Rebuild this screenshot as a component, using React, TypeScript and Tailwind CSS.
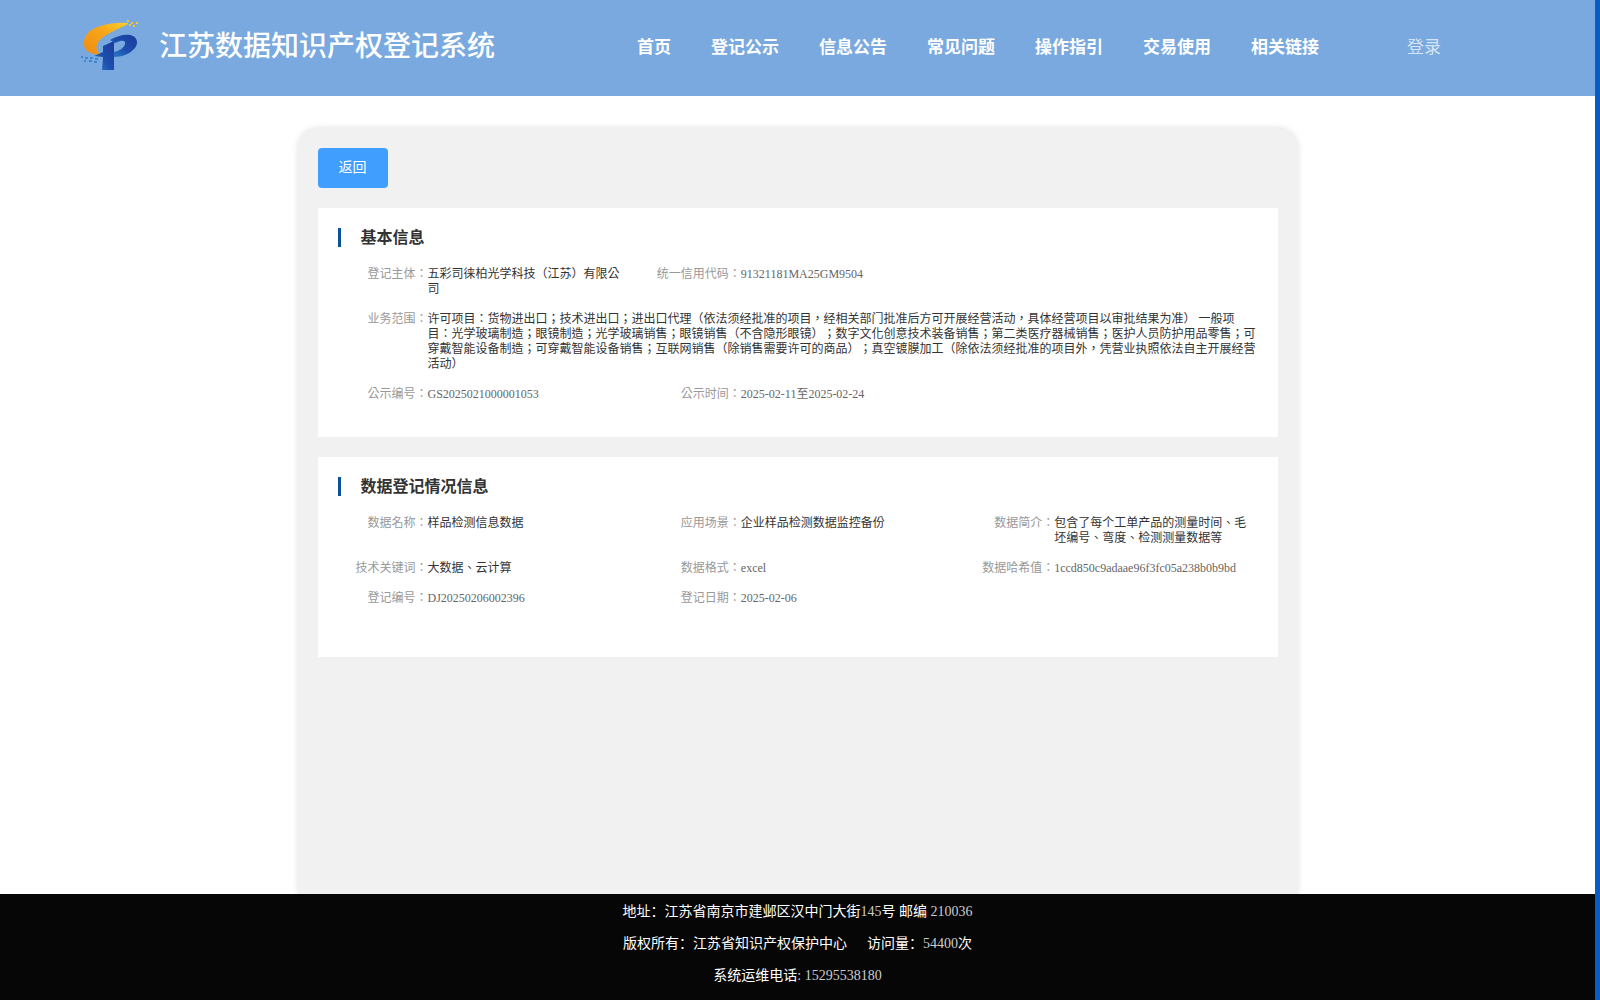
const FONT = "font-['Liberation_Serif','Noto_Sans_CJK_SC',serif]";

const navItems = ["首页", "登记公示", "信息公告", "常见问题", "操作指引", "交易使用", "相关链接"];

const scope =
  "许可项目：货物进出口；技术进出口；进出口代理（依法须经批准的项目，经相关部门批准后方可开展经营活动，具体经营项目以审批结果为准） 一般项目：光学玻璃制造；眼镜制造；光学玻璃销售；眼镜销售（不含隐形眼镜）；数字文化创意技术装备销售；第二类医疗器械销售；医护人员防护用品零售；可穿戴智能设备制造；可穿戴智能设备销售；互联网销售（除销售需要许可的商品）；真空镀膜加工（除依法须经批准的项目外，凭营业执照依法自主开展经营活动）";

const Logo = () => (
  <svg viewBox="0 0 80 70" className="w-[80px] h-[70px] shrink-0">
    <defs>
      <linearGradient id="swoosh" x1="0" y1="1" x2="1" y2="0">
        <stop offset="0" stopColor="#f08a10" />
        <stop offset="0.6" stopColor="#f6a81a" />
        <stop offset="1" stopColor="#fbd02a" />
      </linearGradient>
      <linearGradient id="pee" x1="0" y1="1" x2="1" y2="0">
        <stop offset="0" stopColor="#2f7fc8" />
        <stop offset="0.45" stopColor="#1d4fae" />
        <stop offset="1" stopColor="#1c3a9c" />
      </linearGradient>
    </defs>
    <path d="M58 13 C40 12 24 16 17 24 C12 31 13 39 19 42 C23 44 27 45 31 45 C26 41 25 36 29 31 C35 24 46 20 58 14 Z" fill="url(#swoosh)" />
    <path d="M24 46 L33 42 L33 36 L44 31 L44 60 L32 60 L33 47 Z" fill="url(#pee)" />
    <path d="M40 30 C47 26 54 24 60 25 C67 26 69 33 65 38 C60 44 52 47 44 47 L44 42 C49 41 54 38 55 34 C56 31 53 30 50 31 L45 33 Z" fill="url(#pee)" />
    <g fill="#f7c52a">
      <rect x="57" y="10" width="2" height="2" />
      <rect x="61" y="12" width="2" height="2" />
      <rect x="66" y="12" width="2" height="2" />
      <rect x="59" y="14" width="2" height="2" />
      <rect x="63" y="15" width="2" height="2" />
    </g>
    <g fill="#3f86cf">
      <rect x="11" y="46" width="2" height="2" />
      <rect x="15" y="47" width="3" height="2" />
      <rect x="20" y="47" width="3" height="2" />
      <rect x="25" y="48" width="3" height="2" />
      <rect x="14" y="50" width="2" height="2" />
      <rect x="19" y="50" width="3" height="2" />
      <rect x="24" y="51" width="3" height="2" />
    </g>
  </svg>
);

const Field = ({ label, value, span, latin }: { label: string; value: string; span?: boolean; latin?: boolean }) => (
  <div className={`flex pr-5 ${span ? "col-span-3" : ""}`}>
    <div className="w-[90px] shrink-0 text-right text-[#999]">{label}：</div>
    <div className={`flex-1 min-w-0 break-all ${latin ? "text-[#666]" : "text-[#333]"}`}>{value}</div>
  </div>
);

const Section = ({ title, className, children }: { title: string; className: string; children: React.ReactNode }) => (
  <div className={`bg-white pl-5 pt-5 ${className}`}>
    <div className="flex items-center h-[19px] mb-5">
      <div className="w-[3px] h-[19px] bg-[#0d5199]" />
      <h3 className="ml-5 text-base font-bold text-[#333]">{title}</h3>
    </div>
    <div className="grid grid-cols-3 gap-y-[15px] text-[12px] leading-[15px] font-['Liberation_Serif','Noto_Sans_CJK_TC',serif]">{children}</div>
  </div>
);

export default function App() {
  return (
    <div className={`flex h-screen overflow-hidden bg-white [text-spacing-trim:space-all] ${FONT}`}>
      <div className="flex-1 min-w-0 flex flex-col">
        {/* Header */}
        <header className="h-24 shrink-0 bg-[#79a9de] flex items-start text-white">
          <div className="flex items-start pl-[70px] pt-[10px]">
            <Logo />
            <h1 className="ml-[9px] mt-[2px] text-[28px] leading-[70px] font-medium whitespace-nowrap">江苏数据知识产权登记系统</h1>
          </div>
          <nav className="flex gap-10 ml-[142px] pt-9 text-[17px] leading-6 font-bold whitespace-nowrap">
            {navItems.map((item) => (
              <a key={item}>{item}</a>
            ))}
          </nav>
          <a className="ml-[88px] pt-9 text-[17px] leading-6 text-white/70">登录</a>
        </header>

        {/* Detail card */}
        <main className="flex-1 min-h-0 overflow-hidden pt-8 px-2">
          <div className="mx-auto w-[1000px] h-full p-5 bg-[#f1f1f1] rounded-t-[20px] shadow-[0_0_6px_rgba(0,0,0,0.12)]">
            <button className="block w-[70px] h-10 rounded bg-[#409eff] text-white text-sm">返回</button>
            <Section title="基本信息" className="mt-5 pb-[35px]">
              <Field label="登记主体" value="五彩司徕柏光学科技（江苏）有限公司" />
              <div className="col-span-2">
                <Field latin label="统一信用代码" value="91321181MA25GM9504" />
              </div>
              <Field span label="业务范围" value={scope} />
              <Field latin label="公示编号" value="GS2025021000001053" />
              <Field latin label="公示时间" value="2025-02-11至2025-02-24" />
            </Section>
            <Section title="数据登记情况信息" className="mt-5 pb-[51px]">
              <Field label="数据名称" value="样品检测信息数据" />
              <Field label="应用场景" value="企业样品检测数据监控备份" />
              <Field label="数据简介" value="包含了每个工单产品的测量时间、毛坯编号、弯度、检测测量数据等" />
              <Field label="技术关键词" value="大数据、云计算" />
              <Field latin label="数据格式" value="excel" />
              <Field latin label="数据哈希值" value="1ccd850c9adaae96f3fc05a238b0b9bd" />
              <Field latin label="登记编号" value="DJ20250206002396" />
              <Field latin label="登记日期" value="2025-02-06" />
            </Section>
          </div>
        </main>

        {/* Footer */}
        <footer className="h-[106px] shrink-0 bg-[#060606] text-white text-sm leading-8 text-center pt-[2px]">
          <p>地址：江苏省南京市建邺区汉中门大街<span className="text-[#ccc]">145</span>号 邮编 <span className="text-[#ccc]">210036</span></p>
          <p className="flex justify-center gap-5">
            <span>版权所有：江苏省知识产权保护中心</span>
            <span>访问量：<span className="text-[#ccc]">54400</span>次</span>
          </p>
          <p>系统运维电话<span className="text-[#ccc]">: 15295538180</span></p>
        </footer>
      </div>
      <div className="w-[5px] shrink-0 bg-[#0a5cc5]" />
    </div>
  );
}
